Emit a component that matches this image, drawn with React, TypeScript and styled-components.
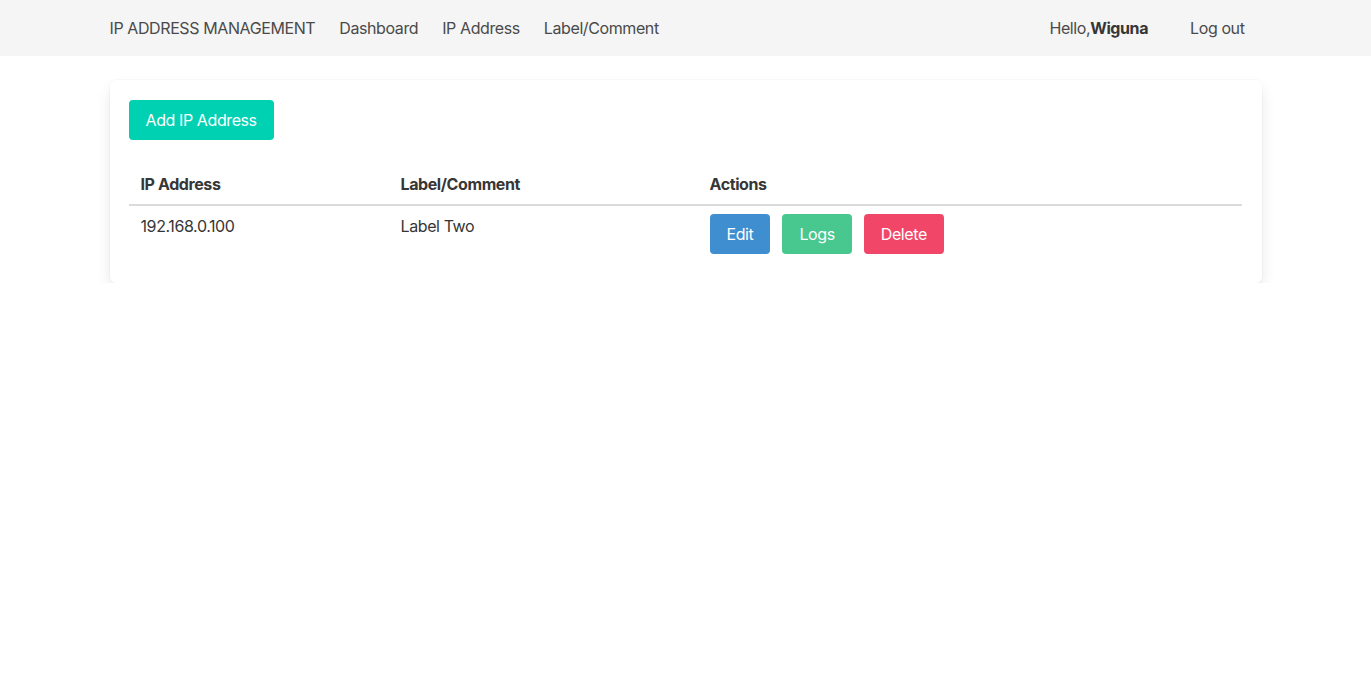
import React from "react";
import styled, { createGlobalStyle } from "styled-components";

const GlobalStyle = createGlobalStyle`
  html, body {
    margin: 0;
    padding: 0;
    background: #fff;
  }

  body {
    font-family: Inter, "Noto Sans", "Liberation Sans", sans-serif;
    font-size: 16px;
    line-height: 1.5;
    letter-spacing: -0.4px;
    color: #4a4a4a;
  }
`;

const rows = [{ ip: "192.168.0.100", label: "Label Two" }];

const App = () => {
  return (
    <>
      <GlobalStyle />
      <NavBar>
        <NavContainer>
          <NavStart>
            <NavItem>IP ADDRESS MANAGEMENT</NavItem>
            <NavItem>Dashboard</NavItem>
            <NavItem>IP Address</NavItem>
            <NavItem>Label/Comment</NavItem>
          </NavStart>
          <NavEnd>
            <NavItem>
              Hello,<strong>Wiguna</strong>
            </NavItem>
            <NavItem $wide>Log out</NavItem>
          </NavEnd>
        </NavContainer>
      </NavBar>

      <Section>
        <Container>
          <Box>
            <Button $color="#00d1b2">Add IP Address</Button>
            <Table>
              <thead>
                <tr>
                  <Th $width="260px">IP Address</Th>
                  <Th $width="309px">Label/Comment</Th>
                  <Th>Actions</Th>
                </tr>
              </thead>
              <tbody>
                {rows.map((row) => (
                  <tr key={row.ip}>
                    <Td>{row.ip}</Td>
                    <Td>{row.label}</Td>
                    <Td>
                      <Actions>
                        <Button $color="#3e8ed0">Edit</Button>
                        <Button $color="#48c78e">Logs</Button>
                        <Button $color="#f14668">Delete</Button>
                      </Actions>
                    </Td>
                  </tr>
                ))}
              </tbody>
            </Table>
          </Box>
        </Container>
      </Section>
    </>
  );
};

const NavBar = styled.nav`
  background: #f5f5f5;
  height: 56px;
`;

const Container = styled.div`
  width: 1152px;
  margin: 0 auto;
`;

const NavContainer = styled(Container)`
  height: 100%;
  display: flex;
  justify-content: space-between;
  align-items: center;
`;

const NavStart = styled.div`
  display: flex;
  align-items: center;
  margin-left: -12px;
`;

const NavEnd = styled.div`
  display: flex;
  align-items: center;
  margin-right: 5px;
`;

const NavItem = styled.a<{ $wide?: boolean }>`
  padding: 8px 12px;
  padding-left: ${(props) => (props.$wide ? "30px" : "12px")};
  color: #4a4a4a;
  cursor: pointer;
  line-height: 1.5;

  strong {
    color: #363636;
    font-weight: 700;
  }
`;

const Section = styled.section`
  padding-top: 24px;
`;

const Box = styled.div`
  background: #fff;
  border-radius: 6px;
  box-shadow: 0 0.5em 1em -0.125em rgba(10, 10, 10, 0.12),
    0 0 0 1px rgba(10, 10, 10, 0.02);
  padding: 20px 20px 20px 19px;
  display: flex;
  flex-direction: column;
  align-items: flex-start;
`;

const Button = styled.button<{ $color: string }>`
  background: ${(props) => props.$color};
  color: #fff;
  border: 1px solid transparent;
  border-radius: 4px;
  height: 40px;
  padding: 0 16px;
  font-family: inherit;
  font-size: 16px;
  letter-spacing: inherit;
  line-height: 1.5;
  cursor: pointer;
`;

const Table = styled.table`
  width: 100%;
  table-layout: fixed;
  margin-top: 24px;
  border-collapse: collapse;
  color: #363636;
`;

const Th = styled.th<{ $width?: string }>`
  box-sizing: border-box;
  width: ${(props) => props.$width || "auto"};
  text-align: left;
  font-weight: 700;
  padding: 8px 12px;
  border-bottom: 2px solid #dbdbdb;
  vertical-align: top;
`;

const Td = styled.td`
  padding: 8px 12px 9px;
  vertical-align: top;
`;

const Actions = styled.div`
  display: flex;
  gap: 12px;
`;

export default App;
